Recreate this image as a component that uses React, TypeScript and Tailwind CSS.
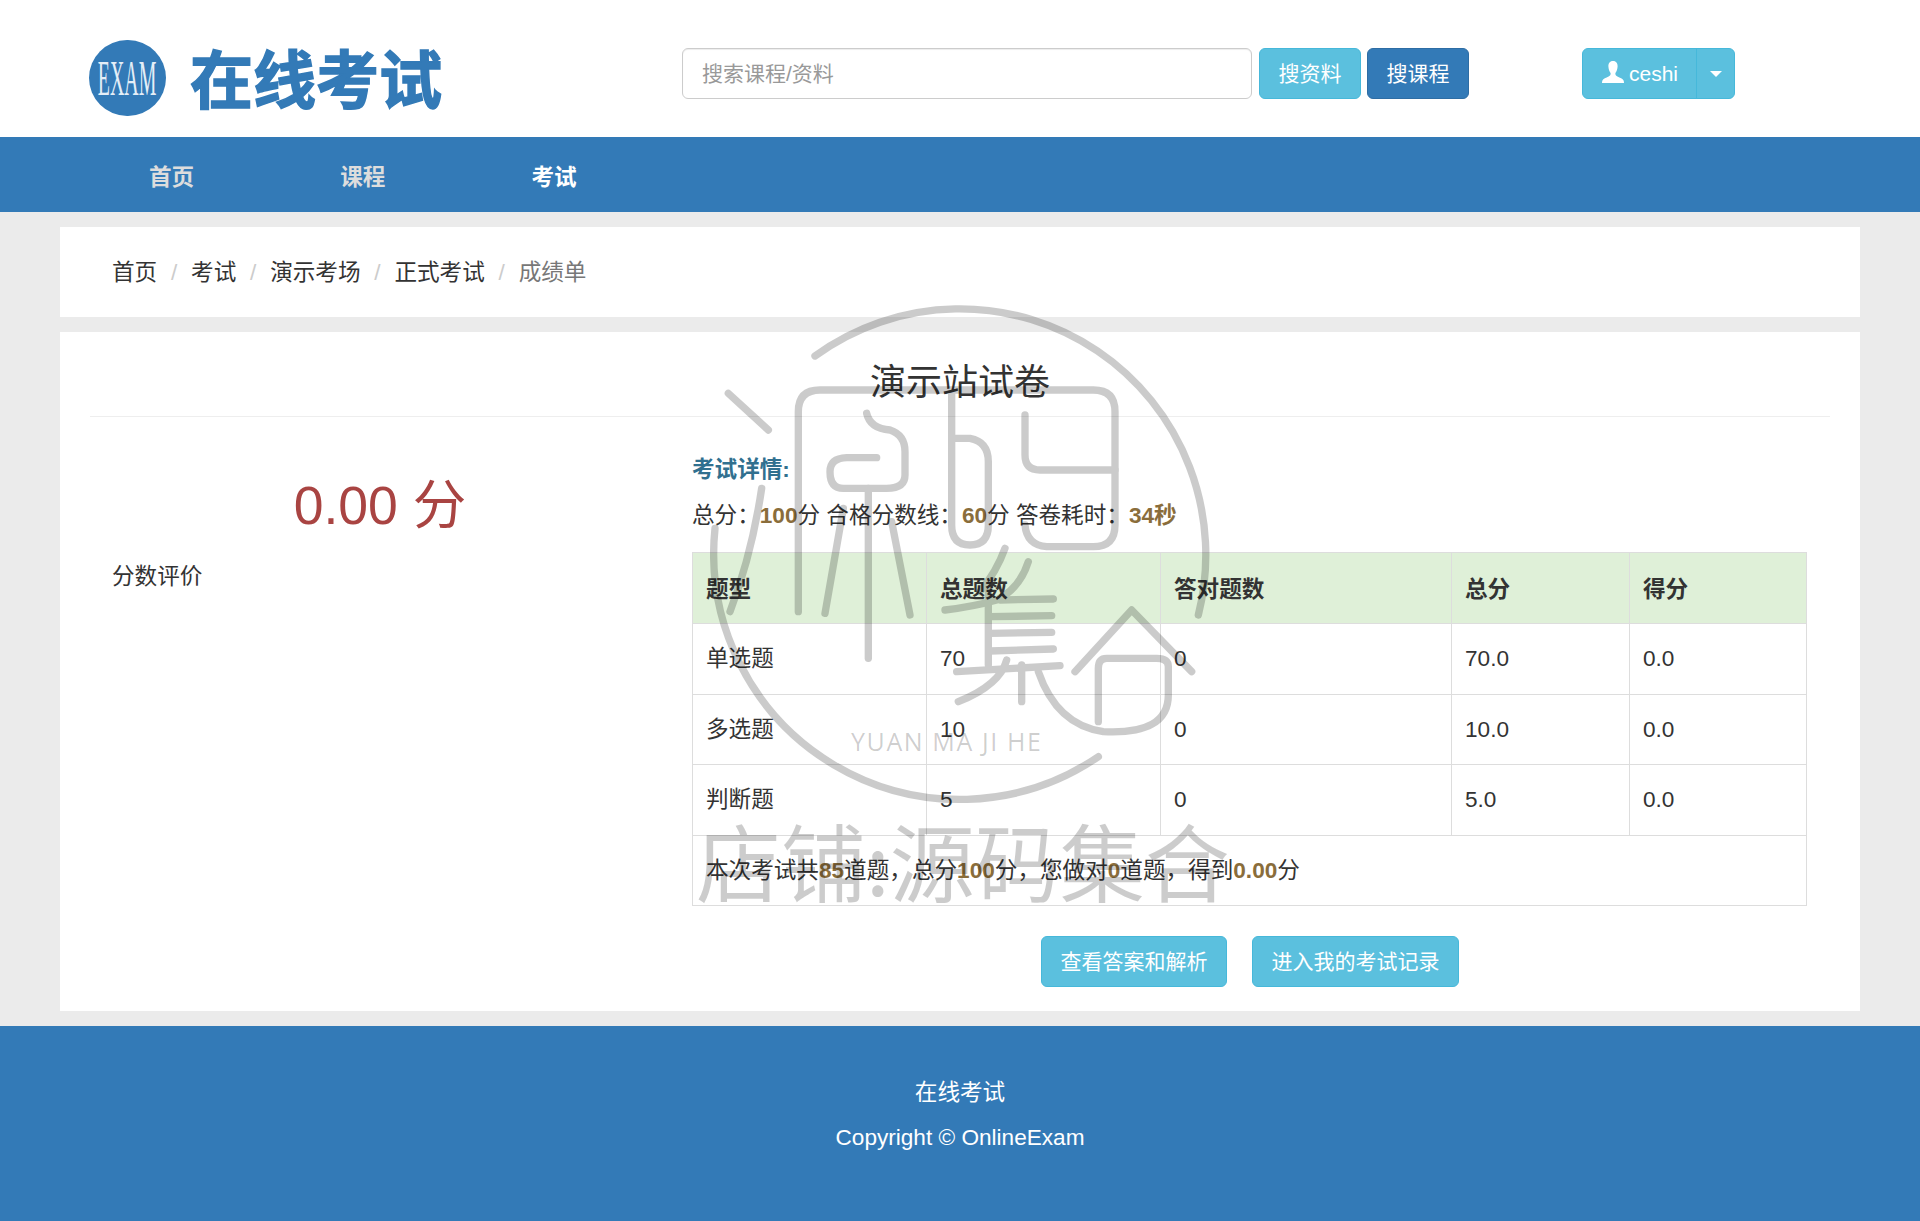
import React from "react";

const colon = "\uFF1A";
const comma = "\uFF0C";

const rows = [
  { name: "单选题", total: "70", right: "0", score: "70.0", got: "0.0", h: "h-[71px]" },
  { name: "多选题", total: "10", right: "0", score: "10.0", got: "0.0", h: "h-[70px]" },
  { name: "判断题", total: "5", right: "0", score: "5.0", got: "0.0", h: "h-[71px]" },
];

const crumbs = ["首页", "考试", "演示考场", "正式考试"];

function Watermark() {
  return (
    <div className="pointer-events-none absolute left-[710px] top-[295px] z-10 w-[520px] h-[520px]">
      <svg viewBox="0 0 1560 1560" className="w-[520px] h-[520px] overflow-visible opacity-20">
        <g fill="none" stroke="#000" strokeWidth="22" strokeLinecap="round" strokeLinejoin="round">
          <path d="M315 183A738 738 0 0 1 1465 960" />
          <path d="M1165 1385A738 738 0 0 1 15 700" />
          <path d="M55 295L175 405" />
          <path d="M155 580Q125 780 60 950" />
          <path d="M265 950L265 350Q265 285 330 285L1150 285Q1215 285 1215 350L1215 690Q1215 755 1150 755L1010 755Q950 750 945 690" />
          <path d="M945 360L945 480Q945 525 990 525L1215 525" />
          <path d="M470 355Q480 400 540 405Q585 420 585 470L585 540Q585 580 530 580L400 580Q360 580 360 530Q360 490 410 488L500 488" />
          <path d="M475 580L475 1090" />
          <path d="M400 640L345 955" />
          <path d="M545 680L600 960" />
          <path d="M725 290L725 690Q725 750 780 750Q835 750 835 690L835 500Q835 440 780 430L725 430" />
          <path d="M885 760Q860 830 810 890" />
          <path d="M955 800Q930 880 860 915Q790 935 705 945" />
          <path d="M870 915L1030 912" />
          <path d="M840 965L1025 962" />
          <path d="M840 1015L1025 1012" />
          <path d="M840 1068L1030 1062" />
          <path d="M835 880L835 1110" />
          <path d="M740 1130L1050 1112" />
          <path d="M935 1110L935 1220" />
          <path d="M890 1095Q870 1170 745 1220" />
          <path d="M985 1130Q1040 1290 1180 1310Q1375 1320 1375 1200L1375 1115Q1375 1090 1340 1090L1190 1090Q1165 1090 1165 1120L1165 1280" />
          <path d="M1095 1130L1265 945L1445 1130" />
        </g>
      </svg>
      <div className="absolute left-[141px] top-[430px] whitespace-nowrap font-['Open_Sans',sans-serif] text-[25px] leading-[32px] tracking-[1.6px] text-black/20">
        YUAN MA JI HE
      </div>
      <div className="absolute left-[-14px] top-[508px] whitespace-nowrap font-['Noto_Sans_CJK_SC',sans-serif] text-[85px] leading-[112px] text-black/20">
        店铺:源码集合
      </div>
    </div>
  );
}

function App() {
  return (
    <div className="relative w-[1920px] h-[1221px] overflow-hidden bg-[#ebebeb] font-['Liberation_Sans','Noto_Sans_CJK_SC',sans-serif] text-[22.6px] text-[#333]">
      <header className="flex items-start h-[137px] bg-white pl-[89px]">
        <div className="flex items-start w-[593px] mt-[40px]">
          <div className="flex items-center justify-center w-[77px] h-[76px] rounded-full bg-[#337ab7] overflow-hidden">
            <span className="inline-block scale-x-[0.39] font-['Liberation_Serif',serif] text-[51px] leading-none text-[#e4eef7]">
              EXAM
            </span>
          </div>
          <h1 className="ml-[24px] mt-[3px] text-[63px] leading-[76px] font-bold text-[#337ab7] [-webkit-text-stroke:1.5px_#337ab7]">
            在线考试
          </h1>
        </div>
        <div className="flex items-center mt-[48px]">
          <input
            placeholder="搜索课程/资料"
            className="w-[570px] h-[51px] px-[19px] rounded-[6px] border border-[#ccc] bg-white text-[21px] shadow-[inset_0_1px_1px_rgba(0,0,0,0.075)] placeholder:text-[#999]"
          />
          <button className="ml-[7px] w-[102px] h-[51px] rounded-[6px] border border-[#46b8da] bg-[#5bc0de] text-[21px] text-white">
            搜资料
          </button>
          <button className="ml-[6px] w-[102px] h-[51px] rounded-[6px] border border-[#2e6da4] bg-[#337ab7] text-[21px] text-white">
            搜课程
          </button>
          <div className="flex ml-[113px] h-[51px] rounded-[6px] border border-[#46b8da] bg-[#5bc0de] text-white">
            <div className="flex items-center w-[114px] pl-[19px] border-r border-[#46b8da]">
              <svg viewBox="0 0 22 22" className="w-[22px] h-[22px] mb-[4px] fill-white">
                <path d="M11 0C7.6 0 6.2 2.6 6.4 5.6C6.6 8.6 7.4 10.6 8.6 12C8.8 13.4 8.4 14.6 6.6 15.6C4 17 1.2 17.8 0.4 19.4C0 20.4 0 21.2 0 22L22 22C22 21.2 22 20.4 21.6 19.4C20.8 17.8 18 17 15.4 15.6C13.6 14.6 13.2 13.4 13.4 12C14.6 10.6 15.4 8.6 15.6 5.6C15.8 2.6 14.4 0 11 0Z" />
              </svg>
              <span className="ml-[5px] text-[21px]">ceshi</span>
            </div>
            <div className="flex items-center justify-center flex-1 w-[37px]">
              <span className="w-0 h-0 border-x-[6px] border-x-transparent border-t-[6px] border-t-white" />
            </div>
          </div>
        </div>
      </header>

      <nav className="flex items-center h-[75px] bg-[#337ab7] pt-[6px] pl-[149px] gap-[146px] font-bold text-[#ddd]">
        <a>首页</a>
        <a>课程</a>
        <a className="text-white">考试</a>
      </nav>

      <div className="flex items-center h-[90px] mx-[60px] mt-[15px] bg-white pt-[2px] px-[52px]">
        {crumbs.map((c) => (
          <React.Fragment key={c}>
            <a>{c}</a>
            <span className="px-[13.8px] text-[#ccc]">/</span>
          </React.Fragment>
        ))}
        <span className="text-[#777]">成绩单</span>
      </div>

      <main className="mx-[60px] mt-[15px] bg-white h-[679px] px-[30px]">
        <h2 className="flex items-center justify-center h-[85px] pt-[18px] border-b border-[#eee] text-[36px] font-normal">
          演示站试卷
        </h2>
        <div className="flex">
          <div className="w-[602px] pl-[22px]">
            <div className="w-[536px] mt-[54px] text-center text-[53.5px] leading-[70px] text-[#a94442]">0.00 分</div>
            <p className="mt-[21px] leading-[30px]">分数评价</p>
          </div>
          <div className="w-[1114px]">
            <p className="mt-[38px] leading-[30px] font-bold text-[#31708f]">考试详情:</p>
            <p className="mt-[16px] leading-[30px]">
              总分{colon}
              <strong className="text-[#8a6d3b]">100</strong>分 合格分数线{colon}
              <strong className="text-[#8a6d3b]">60</strong>分 答卷耗时{colon}
              <strong className="text-[#8a6d3b]">34秒</strong>
            </p>
            <table className="mt-[21px] w-[1114px] table-fixed border-collapse border border-[#ddd]">
              <colgroup>
                <col className="w-[234px]" />
                <col className="w-[234px]" />
                <col className="w-[291px]" />
                <col className="w-[178px]" />
                <col className="w-[177px]" />
              </colgroup>
              <thead>
                <tr className="h-[71px] bg-[#dff0d8] text-left">
                  {["题型", "总题数", "答对题数", "总分", "得分"].map((t) => (
                    <th key={t} className="border border-[#ddd] px-[13px] pt-[3px] font-bold">
                      {t}
                    </th>
                  ))}
                </tr>
              </thead>
              <tbody>
                {rows.map((r) => (
                  <tr key={r.name} className={r.h}>
                    <td className="border border-[#ddd] px-[13px]">{r.name}</td>
                    <td className="border border-[#ddd] px-[13px]">{r.total}</td>
                    <td className="border border-[#ddd] px-[13px]">{r.right}</td>
                    <td className="border border-[#ddd] px-[13px]">{r.score}</td>
                    <td className="border border-[#ddd] px-[13px]">{r.got}</td>
                  </tr>
                ))}
                <tr className="h-[70px]">
                  <td colSpan={5} className="border border-[#ddd] px-[13px]">
                    本次考试共<strong className="text-[#8a6d3b]">85</strong>道题{comma}总分
                    <strong className="text-[#8a6d3b]">100</strong>分{comma}您做对
                    <strong className="text-[#8a6d3b]">0</strong>道题{comma}得到
                    <strong className="text-[#8a6d3b]">0.00</strong>分
                  </td>
                </tr>
              </tbody>
            </table>
            <div className="flex gap-[25px] mt-[30px] ml-[349px]">
              <button className="w-[186px] h-[51px] rounded-[6px] border border-[#46b8da] bg-[#5bc0de] text-[21px] text-white">
                查看答案和解析
              </button>
              <button className="w-[207px] h-[51px] rounded-[6px] border border-[#46b8da] bg-[#5bc0de] text-[21px] text-white">
                进入我的考试记录
              </button>
            </div>
          </div>
        </div>
      </main>

      <footer className="flex flex-col items-center mt-[15px] h-[195px] bg-[#337ab7] pt-[52px] text-white">
        <p className="leading-[30px]">在线考试</p>
        <p className="mt-[15px] leading-[30px]">Copyright © OnlineExam</p>
      </footer>

      <Watermark />
    </div>
  );
}

export default App;
